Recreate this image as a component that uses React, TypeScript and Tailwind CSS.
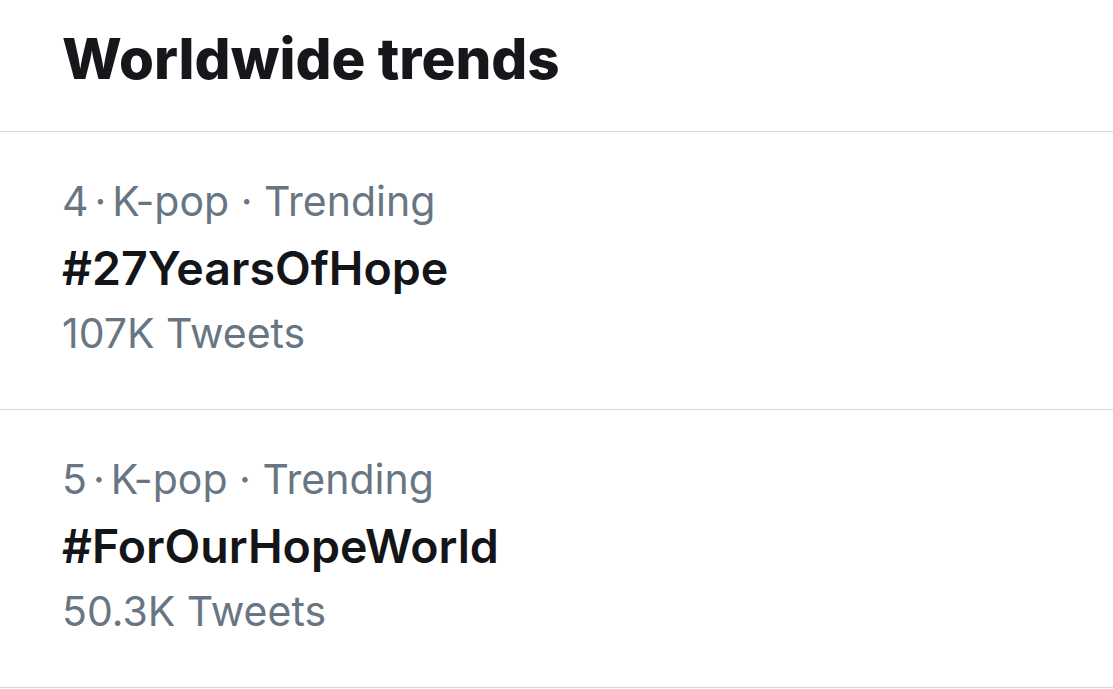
const trends = [
  { rank: 4, category: "K-pop", name: "#27YearsOfHope", count: "107K Tweets" },
  { rank: 5, category: "K-pop", name: "#ForOurHopeWorld", count: "50.3K Tweets" },
];

function TrendRow({ rank, category, name, count }: (typeof trends)[number]) {
  return (
    <div className="border-b border-[#d4d8dc] pl-[62px] pt-[45px] pb-[52px]">
      <div className="text-[41px] leading-[48px] text-[#687684] whitespace-nowrap">
        {rank}
        <span className="mx-[6px]">·</span>
        {category} · Trending
      </div>
      <div className="mt-[15px] text-[46.5px] leading-[56px] font-semibold text-[#131518] whitespace-nowrap">
        {name}
      </div>
      <div className="mt-[13px] text-[41px] leading-[48px] text-[#687684] whitespace-nowrap">
        {count}
      </div>
    </div>
  );
}

export default function App() {
  return (
    <div className="w-[1113px] h-[689px] overflow-hidden bg-white font-['Inter',sans-serif] antialiased">
      <div className="h-[132px] border-b border-[#d4d8dc] pl-[62px] pt-[31px]">
        <h1 className="text-[56.5px] leading-[56.5px] font-extrabold text-[#15171a]">
          Worldwide trends
        </h1>
      </div>
      {trends.map((t) => (
        <TrendRow key={t.rank} {...t} />
      ))}
    </div>
  );
}
